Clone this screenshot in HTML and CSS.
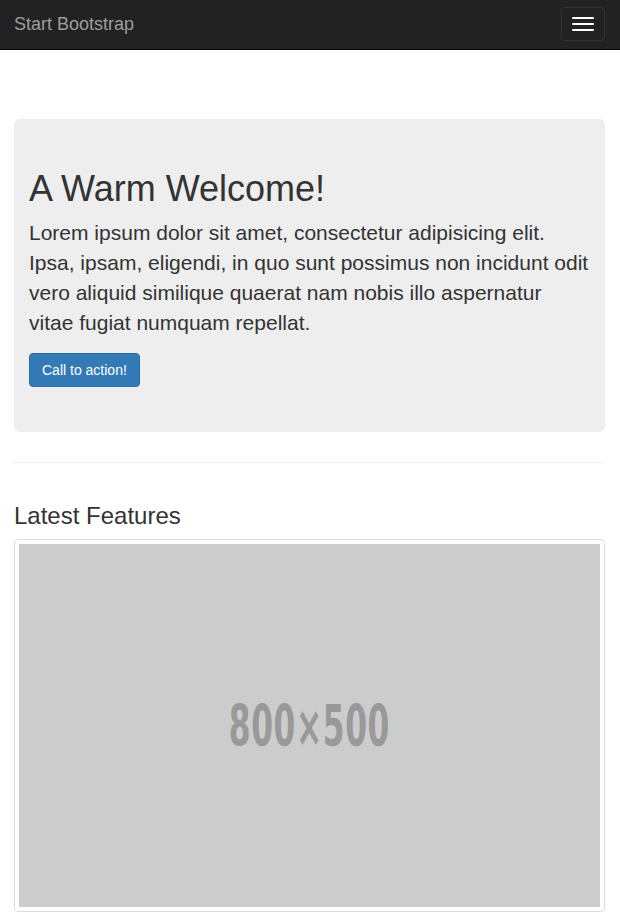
FILE: index.html
```html
<!DOCTYPE html>
<html lang="en">
<head>
<meta charset="utf-8">
<title>Heroic Features - Start Bootstrap</title>
<link rel="stylesheet" href="styles.css">
</head>
<body>
<nav class="navbar">
  <a class="brand" href="#">Start Bootstrap</a>
  <button class="toggle" type="button" aria-label="Toggle navigation">
    <span class="bar"></span><span class="bar"></span><span class="bar"></span>
  </button>
</nav>
<main class="container">
  <header class="jumbotron">
    <h1>A Warm Welcome!</h1>
    <p class="lead">Lorem ipsum dolor sit amet, consectetur adipisicing elit. Ipsa, ipsam, eligendi, in quo sunt possimus non incidunt odit vero aliquid similique quaerat nam nobis illo aspernatur vitae fugiat numquam repellat.</p>
    <div class="actions"><a class="btn" href="#">Call to action!</a></div>
  </header>
  <hr class="divider">
  <h3 class="section-title">Latest Features</h3>
  <div class="thumbnail">
    <div class="placeholder"><span class="ph-text">800×500</span></div>
  </div>
</main>
</body>
</html>
```
FILE: styles.css
```css
* { box-sizing: border-box; }
html, body { margin: 0; padding: 0; }
body {
  font-family: "Liberation Sans", Arial, sans-serif;
  font-size: 14px;
  line-height: 1.42857;
  color: #333;
  background: #fff;
  overflow: hidden;
}
.navbar {
  height: 50px;
  background: #222;
  border-bottom: 1px solid #080808;
  display: flex;
  align-items: center;
  justify-content: space-between;
  padding: 0 15px 0 14px;
}
.brand {
  color: #9d9d9d;
  font-size: 18px;
  line-height: 20px;
  text-decoration: none;
  margin-top: -1px;
}
.toggle {
  width: 44px;
  height: 34px;
  margin-top: -1px;
  background: transparent;
  border: 1px solid #333;
  border-radius: 4px;
  padding: 9px 10px;
  display: flex;
  flex-direction: column;
  gap: 4px;
  align-items: center;
}
.bar {
  display: block;
  width: 22px;
  height: 2px;
  border-radius: 1px;
  background: #fff;
}
.container {
  padding: 69px 15px 0 14px;
}
.jumbotron {
  background: #eee;
  border-radius: 6px;
  padding: 30px 15px;
}
.jumbotron h1 {
  margin: 20px 0 10px;
  font-size: 36px;
  line-height: 39px;
  font-weight: normal;
  color: #333;
}
.lead {
  margin: 0 0 15px;
  font-size: 21px;
  line-height: 30px;
  color: #333;
}
.actions {
  display: flex;
  margin-bottom: 15px;
}
.btn {
  display: inline-block;
  height: 34px;
  padding: 6px 12px;
  font-size: 14px;
  line-height: 20px;
  color: #fff;
  background: #337ab7;
  border: 1px solid #2e6da4;
  border-radius: 4px;
  text-decoration: none;
}
.divider {
  margin: 30px 0 20px;
  border: 0;
  border-top: 1px solid #eee;
  height: 0;
}
.section-title {
  margin: 40px 0 10px;
  font-size: 24px;
  line-height: 26px;
  font-weight: normal;
  color: #333;
}
.thumbnail {
  border: 1px solid #ddd;
  border-radius: 4px;
  padding: 4px;
  background: #fff;
}
.placeholder {
  height: 363px;
  background: #ccc;
  display: flex;
  align-items: center;
  justify-content: center;
}
.ph-text {
  display: inline-block;
  font-family: "DejaVu Sans", sans-serif;
  font-weight: bold;
  font-size: 57px;
  line-height: 1;
  color: #999;
  transform: scaleX(0.55);
  letter-spacing: 1px;
  margin-top: 2px;
}
```
